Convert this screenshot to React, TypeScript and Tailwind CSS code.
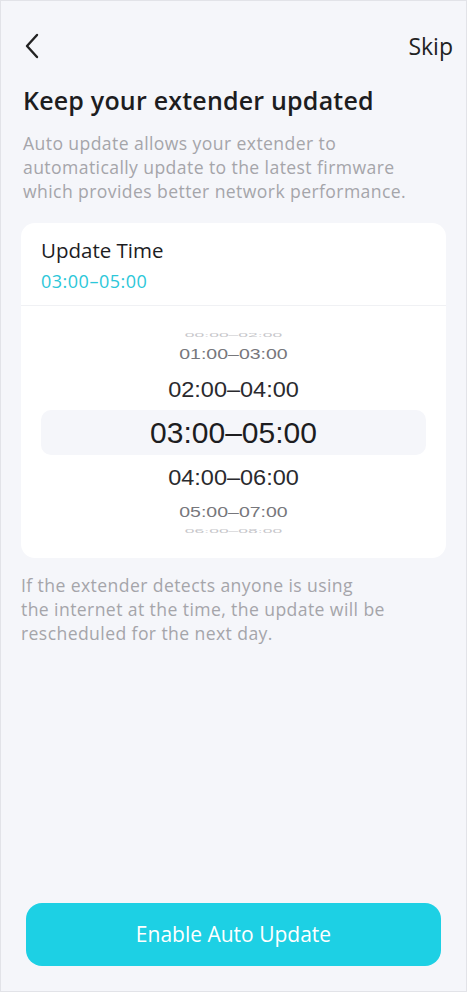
import React from "react";

type R = { t: string; size: number; sy: number; color: string; h: number };

const pickerTop: R[] = [
  { t: "00:00–02:00", size: 17.5, sy: 0.3, color: "#c6c6ca", h: 4 },
  { t: "01:00–03:00", size: 19.5, sy: 0.72, color: "#77777c", h: 34 },
  { t: "02:00–04:00", size: 23.5, sy: 0.92, color: "#2a2a2e", h: 38 },
];
const pickerBottom: R[] = [
  { t: "04:00–06:00", size: 23.5, sy: 0.92, color: "#2a2a2e", h: 48 },
  { t: "05:00–07:00", size: 19.5, sy: 0.72, color: "#77777c", h: 20 },
  { t: "06:00–08:00", size: 17.5, sy: 0.3, color: "#c6c6ca", h: 18 },
];

function Row({ t, size, sy, color, h }: R) {
  return (
    <div className="flex items-center justify-center" style={{ height: h }}>
      <span
        style={{ fontSize: size, color, transform: `scaleY(${sy})`, fontFamily: '"Liberation Sans", Arial, sans-serif', lineHeight: 1 }}
      >
        {t}
      </span>
    </div>
  );
}

export default function App() {
  return (
    <div
      className="flex min-h-[992px] w-full flex-col border border-[#e2e3e8] bg-[#f5f6fa]"
      style={{ fontFamily: '"Open Sans", "Noto Sans", sans-serif' }}
    >
      <div className="flex items-center justify-between pl-[23px] pr-[13px] pt-[28px]">
        <svg width="16" height="26" viewBox="0 0 16 26" fill="none">
          <path d="M13 2 L3 13 L13 24" stroke="#222" strokeWidth="2.4" strokeLinecap="round" strokeLinejoin="round" />
        </svg>
        <span className="text-[23px] leading-[34px] text-[#222]">Skip</span>
      </div>

      <h1 className="mt-[21px] px-[22px] text-[25px] font-semibold leading-[32px] tracking-[0.2px] text-[#1d1d1f]">
        Keep your extender updated
      </h1>
      <p className="mt-[15px] whitespace-nowrap px-[22px] text-[17.6px] leading-[24px] tracking-[0.4px] text-[#a5a5aa]">
        Auto update allows your extender to
        <br />
        automatically update to the latest firmware
        <br />
        which provides better network performance.
      </p>

      <div className="mx-[20px] mt-[20px] rounded-[14px] bg-white">
        <div className="border-b border-[#f0f1f4] px-[20px] pb-[12px] pt-[13px]">
          <div className="text-[20.5px] leading-[28px] text-[#1d1d1f]">Update Time</div>
          <div className="mt-[5px] text-[18px] leading-[24px] tracking-[0.5px] text-[#2cc7d9]">03:00–05:00</div>
        </div>
        <div className="px-[20px] pb-[17px] pt-[28px]">
          {pickerTop.map((p) => (
            <Row key={p.t} {...p} />
          ))}
          <div className="flex h-[45px] items-center justify-center rounded-[10px] bg-[#f5f6fa]">
            <span style={{ fontSize: 30, color: "#1d1d1f", fontFamily: '"Liberation Sans", Arial, sans-serif', lineHeight: 1 }}>
              03:00–05:00
            </span>
          </div>
          {pickerBottom.map((p) => (
            <Row key={p.t} {...p} />
          ))}
        </div>
      </div>

      <p className="mt-[15px] whitespace-nowrap pl-[20px] text-[17.6px] leading-[24px] tracking-[0.4px] text-[#a5a5aa]">
        If the extender detects anyone is using
        <br />
        the internet at the time, the update will be
        <br />
        rescheduled for the next day.
      </p>

      <div className="flex-1" />

      <div className="px-[25px] pb-[25px]">
        <button className="flex h-[63px] w-full items-center justify-center rounded-[16px] bg-[#1dd0e4] text-[21px] font-medium text-white">
          Enable Auto Update
        </button>
      </div>
    </div>
  );
}
